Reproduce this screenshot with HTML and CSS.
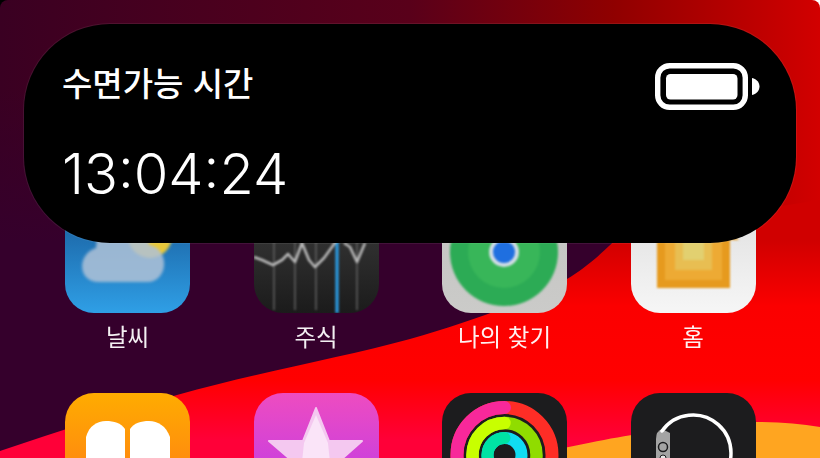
FILE: index.html
```html
<!DOCTYPE html>
<html lang="ko">
<head>
<meta charset="utf-8">
<title>수면가능 시간</title>
<link rel="stylesheet" href="styles.css">
</head>
<body>
<div class="screen">
  <svg class="wallpaper" viewBox="0 0 820 458" aria-hidden="true">
    <defs>
      <linearGradient id="wpTop" gradientUnits="userSpaceOnUse" x1="0" y1="0" x2="820" y2="0">
        <stop offset="0" stop-color="#3a0022"/>
        <stop offset="0.5" stop-color="#59001a"/>
        <stop offset="0.75" stop-color="#900000"/>
        <stop offset="1" stop-color="#d20000"/>
      </linearGradient>
      <linearGradient id="wpPurple" gradientUnits="userSpaceOnUse" x1="0" y1="90" x2="0" y2="243">
        <stop offset="0" stop-color="#35002c" stop-opacity="0"/>
        <stop offset="1" stop-color="#35002c"/>
      </linearGradient>
      <linearGradient id="wpRed" gradientUnits="userSpaceOnUse" x1="0" y1="240" x2="0" y2="440">
        <stop offset="0" stop-color="#d00000"/>
        <stop offset="0.33" stop-color="#fb0000"/>
        <stop offset="0.7" stop-color="#ff0000"/>
        <stop offset="1" stop-color="#ff0038"/>
      </linearGradient>
    </defs>
    <rect width="820" height="458" fill="url(#wpTop)"/>
    <rect x="0" y="90" width="640" height="368" fill="url(#wpPurple)"/>
    <rect x="0" y="243" width="640" height="215" fill="#35002c"/>
    <path d="M0 451 C60 431 120 411 177 395 C260 372 340 358 410 339 C470 322 530 300 567 279 C585 268 600 256 625 230 L820 200 L820 458 L0 458 Z" fill="url(#wpRed)"/>
    <path d="M560 449 C600 440 640 433 661 431 C700 425 730 422 755 422 C780 422 800 424 820 427 L820 458 L540 458 Z" fill="#ffa520"/>
  </svg>

  <main class="home">
    <div class="app">
      <div class="tile tile-weather">
        <svg class="art art-blur" viewBox="0 0 125 125" aria-hidden="true">
          <circle cx="85" cy="48" r="22" fill="#e8c83a"/>
          <path d="M34 94 C12 94 12 66 31 60 L34 30 L80 30 L84 57 C105 60 104 94 82 94 Z" fill="#afc1d6" fill-opacity="0.86"/>
        </svg>
      </div>
      <span class="label">날씨</span>
    </div>
    <div class="app">
      <div class="tile tile-stocks">
        <svg class="art art-soft" viewBox="0 0 125 125" aria-hidden="true">
          <path d="M20 50V122M41 50V122M62 50V122M103 50V122" class="grid-lines"/>
          <path d="M83 50V125" class="blue-line"/>
          <path d="M0 69 L8 72 L19 77 L28 72 L34 66 L41 74 L48 55 L55 72 L61 79 L70 70 L78 59 L84 50 M90 55 L96 59 L103 74 L111 55" class="chart-line"/>
        </svg>
      </div>
      <span class="label">주식</span>
    </div>
    <div class="app">
      <div class="tile tile-find">
        <svg class="art art-soft" viewBox="0 0 125 125" aria-hidden="true">
          <circle cx="62" cy="64" r="54" fill="#2cab55"/>
          <circle cx="62" cy="64" r="36" fill="#38b659"/>
          <circle cx="62" cy="64" r="15" fill="#d3dde6"/>
          <circle cx="62" cy="64" r="11" fill="#1f6fe0"/>
        </svg>
      </div>
      <span class="label">나의 찾기</span>
    </div>
    <div class="app">
      <div class="tile tile-home">
        <svg class="art art-soft" viewBox="0 0 125 125" aria-hidden="true">
          <path d="M62 15 L108 52 L99 52 L99 100 L26 100 L26 52 L16 52 Z" fill="#e69a1e"/>
          <rect x="34" y="45" width="57" height="47" fill="#edaa34"/>
          <rect x="44" y="45" width="37" height="37" fill="#e8be52"/>
          <rect x="52" y="45" width="21" height="27" fill="#e2d070"/>
        </svg>
      </div>
      <span class="label">홈</span>
    </div>

    <div class="app">
      <div class="tile tile-books">
        <svg class="art" viewBox="0 0 125 125" aria-hidden="true">
          <path d="M21 125 V44 C24 33 32 28 41 28 C49 28 56 30 60 36 V125 Z" fill="#fff"/>
          <path d="M65 125 V36 C69 30 76 28 84 28 C93 28 101 33 105 44 V125 Z" fill="#fff"/>
        </svg>
      </div>
    </div>
    <div class="app">
      <div class="tile tile-star">
        <svg class="art" viewBox="0 0 125 125" aria-hidden="true">
          <path d="M62 15 L75 48 L108 48 L81 72 L92 108 L62 88 L32 108 L43 72 L15 48 L49 48 Z" fill="#f4c8f0" stroke="#f4c8f0" stroke-width="2" stroke-linejoin="round"/>
          <path d="M62 22 L74 50 L78 88 L46 88 L50 50 Z" fill="#ffffff" fill-opacity="0.5"/>
        </svg>
      </div>
    </div>
    <div class="app">
      <div class="tile tile-dark">
        <svg class="art" viewBox="0 0 125 125" fill="none" aria-hidden="true">
          <circle cx="62.5" cy="62" r="47.5" stroke="#ff2d26" stroke-width="13"/>
          <path d="M62.500 109.500 A47.500 47.500 0 0 1 62.500 14.500" stroke="#f8289a" stroke-width="13" stroke-linecap="round"/>
          <circle cx="62.5" cy="62" r="32" stroke="#90dc00" stroke-width="12.5"/>
          <path d="M62.500 94 A32 32 0 0 1 62.500 30" stroke="#c8ff00" stroke-width="12.5" stroke-linecap="round"/>
          <circle cx="62.5" cy="62" r="17" stroke="#10dcf2" stroke-width="12"/>
          <path d="M62.500 79 A17 17 0 0 1 62.500 45" stroke="#00e3a4" stroke-width="12" stroke-linecap="round"/>
        </svg>
      </div>
    </div>
    <div class="app">
      <div class="tile tile-dark">
        <svg class="art" viewBox="0 0 125 125" fill="none" aria-hidden="true">
          <path d="M25 46 Q25 38 31 36 L39 40 L39 125 L25 125 Z" fill="#a4a4a4"/>
          <path d="M31 38 A38 38 0 1 1 31 82" stroke="#fff" stroke-width="3.5" stroke-linecap="round"/>
          <circle cx="32" cy="54" r="4.5" stroke="#1c1c1e" stroke-width="1.5"/>
          <circle cx="32" cy="65" r="3" fill="#e8e8e8" stroke="#1c1c1e" stroke-width="1"/>
        </svg>
      </div>
    </div>
  </main>

  <section class="banner">
    <div class="banner-head">
      <span class="banner-title">수면가능 시간</span>
      <svg class="battery" viewBox="0 0 105 47" aria-hidden="true">
        <rect x="2.700" y="2.700" width="87.600" height="41.600" rx="12" fill="none" stroke="#fff" stroke-width="5.400"/>
        <rect x="11" y="11" width="71.500" height="25.500" rx="4.500" fill="#fff"/>
        <path d="M97 15 C102 16 104.500 20 104.500 23.500 C104.500 27 102 31 97 32 Z" fill="#fff"/>
      </svg>
    </div>
    <div class="banner-time">13:04:24</div>
  </section>
</div>
</body>
</html>
```
FILE: styles.css
```css
* { box-sizing: border-box; }

html, body {
  margin: 0;
  padding: 0;
  width: 820px;
  height: 458px;
  overflow: hidden;
}

body {
  background: linear-gradient(90deg, #000 0 50%, #fff 50% 100%);
  font-family: "Noto Sans CJK KR", "Noto Sans", sans-serif;
}

.screen {
  position: relative;
  width: 820px;
  height: 458px;
  overflow: hidden;
  border-radius: 8px 8px 0 0;
}

.wallpaper {
  position: absolute;
  inset: 0;
  width: 820px;
  height: 458px;
  display: block;
}

.home {
  position: relative;
  display: grid;
  grid-template-columns: repeat(4, 125px);
  grid-auto-rows: 205px;
  column-gap: 63.5px;
  padding: 188px 0 0 65px;
}

.app {
  display: flex;
  flex-direction: column;
  align-items: center;
}

.tile {
  width: 125px;
  height: 125px;
  flex: none;
  border-radius: 29px;
  overflow: hidden;
}

.art {
  display: block;
  width: 125px;
  height: 125px;
}

.art-soft { filter: blur(0.9px); }
.art-blur { filter: blur(1.6px); }

.tile-weather { background: linear-gradient(180deg, #14508e 0%, #2f9fe6 100%); }
.tile-stocks  { background: linear-gradient(180deg, #353535 30%, #1b1b1b 100%); }
.tile-find    { background: linear-gradient(180deg, #c2c2c0 0%, #cbcbc9 100%); }
.tile-home    { background: linear-gradient(180deg, #dcdcdc 0%, #f6f6f6 100%); }
.tile-books   { background: linear-gradient(180deg, #ffac00 0%, #ff8412 70%); }
.tile-star    { background: linear-gradient(180deg, #ee4cc0 0%, #c63ee2 70%); }
.tile-dark    { background: #1c1c1e; }

.grid-lines {
  fill: none;
  stroke: #5c5c5c;
  stroke-width: 1.6;
}

.blue-line {
  fill: none;
  stroke: #2a97dc;
  stroke-width: 3.4;
}

.chart-line {
  fill: none;
  stroke: #b8b8b8;
  stroke-width: 2.6;
  stroke-linejoin: round;
}

.label {
  margin-top: 8px;
  font-size: 23.5px;
  line-height: 30px;
  color: #fff;
  opacity: 0.94;
  white-space: nowrap;
}

.banner {
  position: absolute;
  left: 24px;
  top: 24px;
  width: 772px;
  height: 219px;
  border-radius: 86px;
  background: #000;
  box-shadow: 0 0 0 1px rgba(255, 255, 255, 0.07);
  padding: 34px 36px 0 38px;
  color: #fff;
  display: flex;
  flex-direction: column;
}

.banner-head {
  display: flex;
  justify-content: space-between;
  align-items: flex-start;
}

.banner-title {
  font-size: 33px;
  font-weight: 500;
  line-height: 48px;
  white-space: nowrap;
}

.battery {
  display: block;
  width: 105px;
  height: 47px;
  margin-top: 5px;
}

.banner-time {
  margin-top: 29px;
  font-family: Inter, "Noto Sans", sans-serif;
  font-weight: 300;
  font-size: 56px;
  line-height: 70px;
  white-space: nowrap;
}
```
